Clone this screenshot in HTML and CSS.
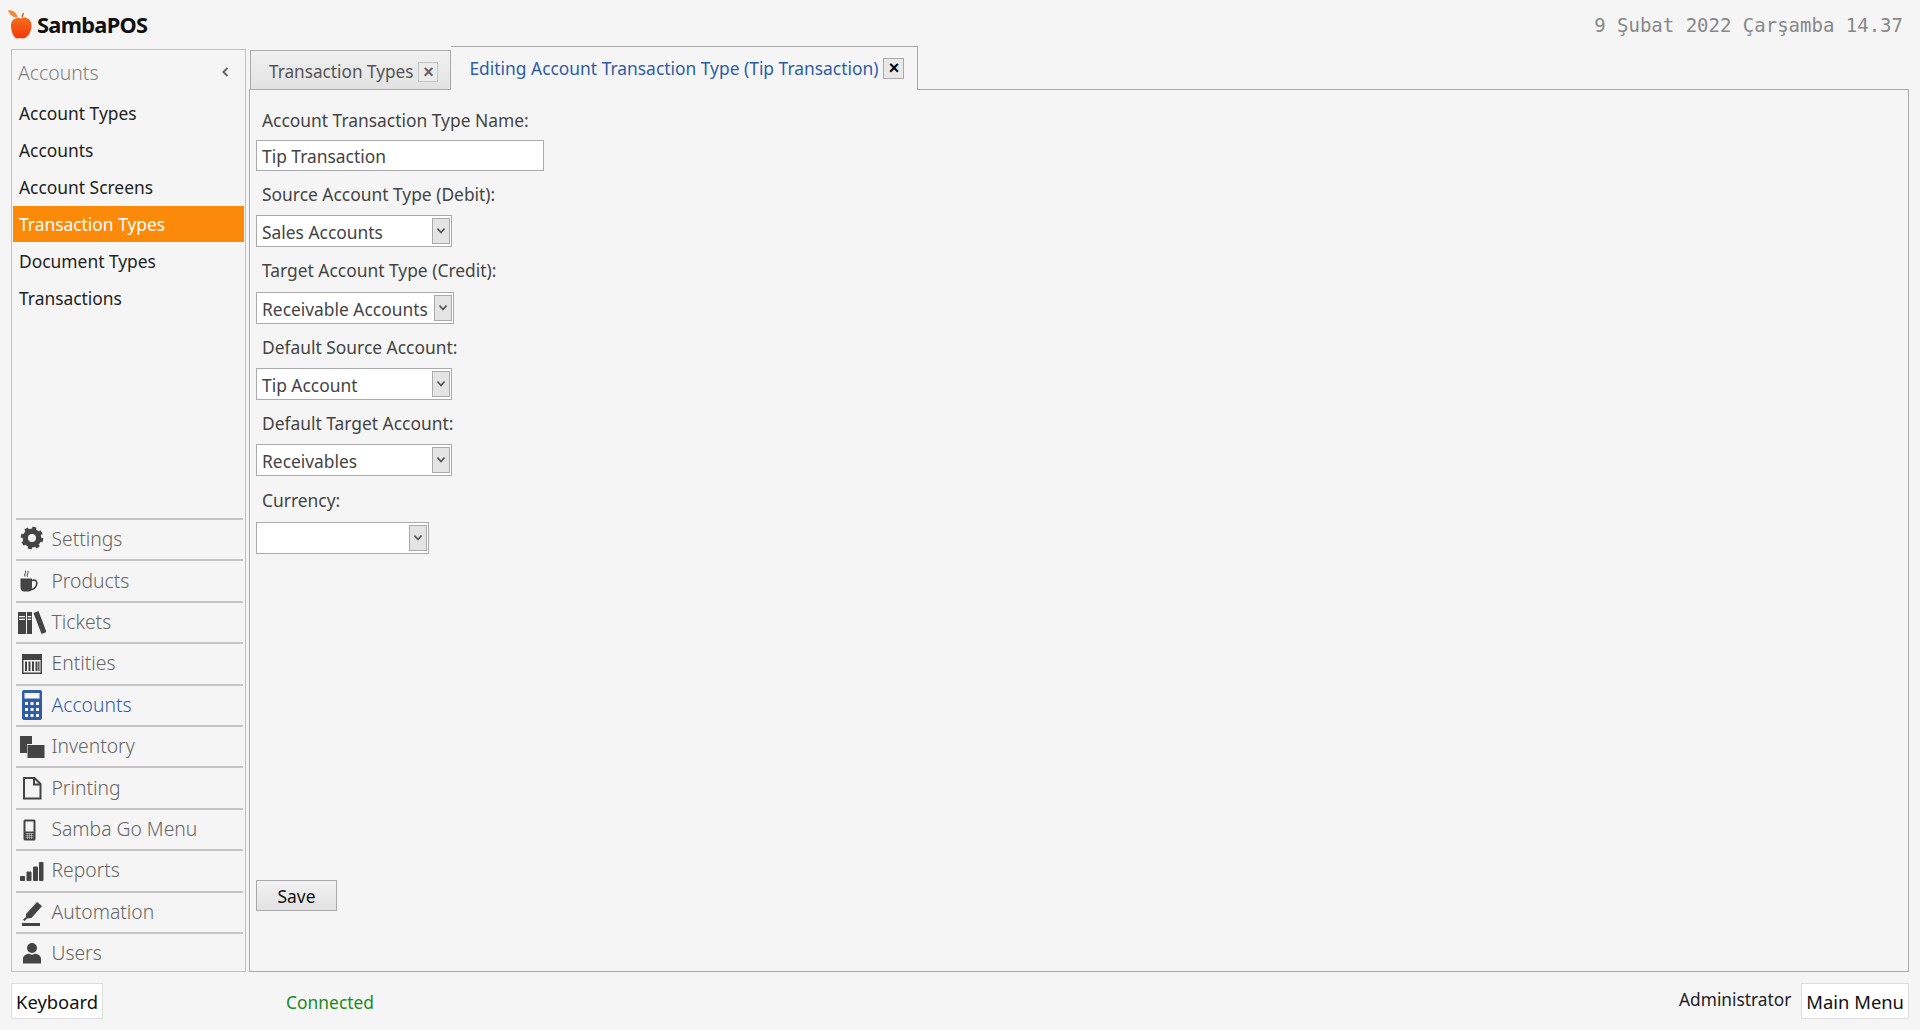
FILE: index.html
```html
<!DOCTYPE html>
<html lang="en">
<head>
<meta charset="utf-8">
<title>SambaPOS</title>
<link rel="stylesheet" href="styles.css">
</head>
<body>
<div class="app">
  <header class="topbar">
    <div class="brand">
      <svg class="apple" viewBox="0 0 24 30" width="24" height="30">
        <defs><linearGradient id="ag" x1="0" y1="0" x2="0" y2="1"><stop offset="0" stop-color="#f2701c"/><stop offset="1" stop-color="#f4380c"/></linearGradient></defs>
        <path d="M0 0.500 C4 -0.500 8 2 10 7.500 C5.500 8 1.500 5 0 0.500Z" fill="#ef8a3c"/>
        <path d="M14 7 L15.500 3" stroke="#d9541a" stroke-width="1.400" fill="none"/>
        <path d="M12.500 8.500 C15 6.500 23 6.500 23.500 15 C24 22 19 28.500 14.500 28.500 C13.500 28.500 13 28 12 28 C11 28 10.500 28.500 9.500 28.500 C6 28.500 3 22 3 15.500 C3 11 6.500 6.500 12.500 8.500Z" fill="url(#ag)"/>
      </svg>
      <span class="brand-name">SambaPOS</span>
    </div>
    <div class="clock">9 Şubat 2022 Çarşamba 14.37</div>
  </header>

  <main class="workspace">
    <aside class="sidebar">
      <div class="side-head"><span>Accounts</span>
        <svg class="collapse" viewBox="0 0 10 12" width="10" height="12"><path d="M7.500 2 L3.500 6 L7.500 10" fill="none" stroke="#666" stroke-width="2"/></svg>
      </div>
      <ul class="side-list">
        <li>Account Types</li>
        <li>Accounts</li>
        <li>Account Screens</li>
        <li class="selected">Transaction Types</li>
        <li>Document Types</li>
        <li>Transactions</li>
      </ul>
      <nav class="side-nav">
        <a class="nav-row"><svg viewBox="0 0 28 30" width="28" height="30"><circle cx="14" cy="13" r="6.700" fill="none" stroke="currentColor" stroke-width="5.400"/><circle cx="14" cy="13" r="9.600" fill="none" stroke="currentColor" stroke-width="3.400" stroke-dasharray="3.800 3.740"/></svg><span>Settings</span></a>
        <a class="nav-row"><svg viewBox="0 0 28 30" width="28" height="30"><path d="M2.500 12.500 H14 V21 C14 24 12.500 25.500 10.500 25.500 H6 C4 25.500 2.500 24 2.500 21Z" fill="currentColor"/><path d="M14 14.500 C18 13 19.500 16 18.500 19 C17.500 22 15 23.500 12.500 24" fill="none" stroke="currentColor" stroke-width="1.600"/><path d="M7 10.500 C5.500 8.500 8.500 7 7.500 4.500 M9.500 10.500 C8 8.500 11 7.500 10 5" fill="none" stroke="currentColor" stroke-width="1"/></svg><span>Products</span></a>
        <a class="nav-row"><svg viewBox="0 0 28 30" width="28" height="30"><path d="M0 4 H8 V26 H0Z M1 8 V9.200 H7 V8Z M1 10.800 V12 H7 V10.800Z" fill="currentColor" fill-rule="evenodd"/><path d="M9 4 H14 V26 H9Z M9.800 8 V9.200 H13.200 V8Z M9.800 10.800 V12 H13.200 V10.800Z" fill="currentColor" fill-rule="evenodd"/><path d="M15.500 5 L20.500 3 L28.500 24 L23.500 26Z" fill="currentColor"/></svg><span>Tickets</span></a>
        <a class="nav-row"><svg viewBox="0 0 28 30" width="28" height="30"><path d="M4 5 H24 V25 H4Z M5.500 11 V23.500 H22.500 V11Z" fill="currentColor" fill-rule="evenodd"/><path d="M7 12.500 H9 V22 H7Z M10.500 12.500 H12.500 V22 H10.500Z M14 12.500 H16 V22 H14Z M17.500 12.500 H19.500 V22 H17.500Z M20.200 12.500 H21.500 V22 H20.200Z" fill="currentColor"/></svg><span>Entities</span></a>
        <a class="nav-row active"><svg viewBox="0 0 28 30" width="28" height="30"><rect x="4" y="0" width="20" height="30" rx="2" fill="currentColor"/><rect x="6.500" y="3" width="15" height="5.500" fill="#f5f5f5"/><g fill="#f5f5f5"><rect x="7" y="12" width="3" height="3"/><rect x="12.500" y="12" width="3" height="3"/><rect x="18" y="12" width="3" height="3"/><rect x="7" y="18" width="3" height="3"/><rect x="12.500" y="18" width="3" height="3"/><rect x="18" y="18" width="3" height="3"/><rect x="7" y="24" width="3" height="3"/><rect x="12.500" y="24" width="3" height="3"/><rect x="18" y="24" width="3" height="3"/></g></svg><span>Accounts</span></a>
        <a class="nav-row"><svg viewBox="0 0 28 30" width="28" height="30"><path d="M2 4 H14 V12 H9 V21 H2Z" fill="currentColor"/><rect x="9.500" y="13" width="17" height="13" fill="currentColor"/></svg><span>Inventory</span></a>
        <a class="nav-row"><svg viewBox="0 0 28 30" width="28" height="30"><path d="M6 5 H16.500 L22.500 11 V25.500 H6Z" fill="none" stroke="currentColor" stroke-width="2"/><path d="M16 5 V11.500 H22.500" fill="none" stroke="currentColor" stroke-width="2"/></svg><span>Printing</span></a>
        <a class="nav-row"><svg viewBox="0 0 28 30" width="28" height="30"><rect x="5.500" y="4.500" width="12" height="21" rx="1.500" fill="currentColor"/><rect x="7.500" y="6.500" width="8" height="10" fill="#f5f5f5"/><path d="M7.500 18.500 H15.500 M7.500 20.500 H15.500 M7.500 22.500 H15.500 M9.500 18 V24 M11.500 18 V24 M13.500 18 V24" stroke="#bbb" stroke-width="0.700"/></svg><span>Samba Go Menu</span></a>
        <a class="nav-row"><svg viewBox="0 0 28 30" width="28" height="30"><rect x="2" y="20" width="5" height="5" rx="1" fill="currentColor"/><rect x="8.500" y="15.500" width="5" height="9.500" rx="1" fill="currentColor"/><rect x="15" y="10.500" width="5" height="14.500" rx="1" fill="currentColor"/><rect x="21" y="6" width="4.500" height="19" rx="1" fill="currentColor"/></svg><span>Reports</span></a>
        <a class="nav-row"><svg viewBox="0 0 28 30" width="28" height="30"><path d="M8 17 L19 5 L24 9 L13.500 21 L9 21.500 L6.500 24 L5 22.500 L8 20Z" fill="currentColor"/><rect x="4" y="26" width="18" height="3" fill="currentColor"/></svg><span>Automation</span></a>
        <a class="nav-row"><svg viewBox="0 0 28 30" width="28" height="30"><circle cx="14" cy="9" r="5" fill="currentColor"/><path d="M5 24.500 V20 C5 16.500 8 15.500 10.500 14.500 C12 16 16 16 17.500 14.500 C20 15.500 23 16.500 23 20 V24.500Z" fill="currentColor"/></svg><span>Users</span></a>
      </nav>
    </aside>

    <section class="editor">
      <div class="tabs">
        <div class="tab"><span>Transaction Types</span><button class="tab-close">×</button></div>
        <div class="tab current"><span>Editing Account Transaction Type (Tip Transaction)</span><button class="tab-close">×</button></div>
      </div>
      <div class="pane">
        <label class="field-label first">Account Transaction Type Name:</label>
        <div class="input">Tip Transaction</div>
        <label class="field-label">Source Account Type (Debit):</label>
        <div class="combo w196"><span>Sales Accounts</span><i class="combo-btn"><svg viewBox="0 0 10 8" width="10" height="8"><path d="M1.500 1.500 L5 5.500 L8.500 1.500" fill="none" stroke="#555" stroke-width="1.700"/></svg></i></div>
        <label class="field-label">Target Account Type (Credit):</label>
        <div class="combo w198"><span>Receivable Accounts</span><i class="combo-btn"><svg viewBox="0 0 10 8" width="10" height="8"><path d="M1.500 1.500 L5 5.500 L8.500 1.500" fill="none" stroke="#555" stroke-width="1.700"/></svg></i></div>
        <label class="field-label">Default Source Account:</label>
        <div class="combo w196"><span>Tip Account</span><i class="combo-btn"><svg viewBox="0 0 10 8" width="10" height="8"><path d="M1.500 1.500 L5 5.500 L8.500 1.500" fill="none" stroke="#555" stroke-width="1.700"/></svg></i></div>
        <label class="field-label">Default Target Account:</label>
        <div class="combo w196"><span>Receivables</span><i class="combo-btn"><svg viewBox="0 0 10 8" width="10" height="8"><path d="M1.500 1.500 L5 5.500 L8.500 1.500" fill="none" stroke="#555" stroke-width="1.700"/></svg></i></div>
        <label class="field-label last">Currency:</label>
        <div class="combo w173"><span></span><i class="combo-btn"><svg viewBox="0 0 10 8" width="10" height="8"><path d="M1.500 1.500 L5 5.500 L8.500 1.500" fill="none" stroke="#555" stroke-width="1.700"/></svg></i></div>
        <button class="save">Save</button>
      </div>
    </section>
  </main>

  <footer class="statusbar">
    <button class="plain-btn">Keyboard</button>
    <span class="status">Connected</span>
    <span class="user">Administrator</span>
    <button class="plain-btn">Main Menu</button>
  </footer>
</div>
</body>
</html>
```

FILE: styles.css
```css
* { box-sizing: border-box; }
html, body { margin: 0; height: 100%; overflow: hidden; }
body {
  background: #f5f5f5;
  font-family: "Noto Sans", "Open Sans", sans-serif;
  font-size: 17.4px;
  color: #222;
}
.app { height: 1030px; display: flex; flex-direction: column; }

.topbar {
  height: 49px; flex: none;
  display: flex; align-items: center; justify-content: space-between;
  padding: 0 17px 0 8px;
}
.brand { display: flex; align-items: center; gap: 5px; }
.apple { display: block; }
.brand-name {
  font-family: "Noto Sans", sans-serif; font-weight: 700; font-size: 21.8px;
  letter-spacing: -0.7px; color: #111;
}
.clock {
  font-family: "DejaVu Sans Mono", monospace; font-size: 19px; color: #888; white-space: pre;
}

.workspace { flex: 1; min-height: 0; display: flex; padding: 0 11px; gap: 3px; }

.sidebar {
  width: 235px; flex: none; height: 923px;
  border: 1px solid #c0c0c0;
  display: flex; flex-direction: column;
}
.side-head {
  height: 44.5px; flex: none; display: flex; align-items: center; justify-content: space-between;
  padding: 0 15px 0 6px; font-size: 19.4px; font-weight: 300; color: #808080;
}
.side-list { list-style: none; margin: 0; padding: 0; }
.side-list li {
  height: 37px; display: flex; align-items: center; padding-left: 6px;
  margin: 0 1px; color: #222; font-size: 17.4px;
}
.side-list li.selected { background: #fb8a0a; color: #fff; height: 36px; margin-bottom: 1px; }

.side-nav { margin-top: auto; padding: 0 2px 0 4px; }
.nav-row {
  height: 41.4px; display: flex; align-items: center; gap: 5.5px;
  border-top: 2px solid #c4c4c4; padding: 0 0 2px 2px;
  color: #666; font-size: 19.3px; font-weight: 300;
}
.nav-row:last-child { height: 39px; padding-bottom: 0; }
.nav-row svg { color: #444; flex: none; display: block; margin-bottom: -2px; }
.nav-row.active, .nav-row.active svg { color: #2f5ca6; }

.editor { flex: 1; min-width: 0; height: 923px; display: flex; flex-direction: column; }
.tabs { height: 40px; display: flex; align-items: flex-end; padding-left: 1px; flex: none; }
.tab {
  display: flex; align-items: center; height: 39px;
  padding: 3px 12px 0 18px; gap: 5px;
  border: 1px solid #aaa; border-bottom: none;
  background: linear-gradient(#f1f1f1, #e2e2e2);
  color: #555; font-size: 17.2px;
}
.tab.current {
  height: 44px; margin-bottom: -1px; padding: 0 13px 1px 18px; position: relative;
  background: #f5f5f5; color: #2f5ca6; border-left: none; font-size: 17.4px;
}
.tab-close {
  width: 20px; height: 20px; padding: 0; border: 1px solid #c4c4c4; background: #ececec;
  font: 700 18px/16px "Liberation Sans", sans-serif; color: #666;
}
.tab.current .tab-close { width: 21px; height: 21px; border-color: #aaa; color: #000; background: #e8e8e8; }

.pane {
  flex: 1; min-height: 0; border: 1px solid #aaa; padding: 0 6px 60px 6px;
  display: flex; flex-direction: column; align-items: flex-start;
}
.field-label { display: flex; align-items: center; height: 44.3px; padding: 2px 0 0 6px; color: #444; flex: none; }
.field-label.first { height: 50px; padding-top: 10px; }
.field-label.last { height: 46px; padding-top: 2px; }
.input {
  width: 288px; height: 31px; background: #fff; border: 1px solid #aaa;
  display: flex; align-items: center; padding-left: 5px; color: #444; flex: none;
}
.combo {
  height: 32px; background: #fff; border: 1px solid #aaa;
  display: flex; align-items: center; justify-content: space-between;
  padding: 2px 1px 2px 5px; color: #444; flex: none;
}
.combo span { padding-top: 2px; }
.w196 { width: 196px; }
.w198 { width: 198px; }
.w173 { width: 173px; }
.combo-btn {
  width: 18px; height: 100%; background: #e4e4e4; border: 1px solid #aaa;
  display: flex; align-items: center; justify-content: center; flex: none;
}
.save {
  margin-top: auto; width: 81px; height: 31px; border: 1px solid #aaa;
  background: linear-gradient(#f2f2f2, #e2e2e2);
  font: inherit; color: #111;
}

.statusbar {
  height: 58px; flex: none; display: flex; align-items: flex-start;
  padding: 11px 11px 0;
}
.plain-btn {
  height: 36px; padding: 0 4px; background: #fff; border: 1px solid #ddd;
  font: inherit; font-size: 18.4px; color: #111;
}
.status { margin-left: 183px; margin-top: 7px; color: #1a8a22; }
.user { margin-left: auto; margin-right: 10px; margin-top: 5px; color: #222; font-size: 17.3px; }
```
